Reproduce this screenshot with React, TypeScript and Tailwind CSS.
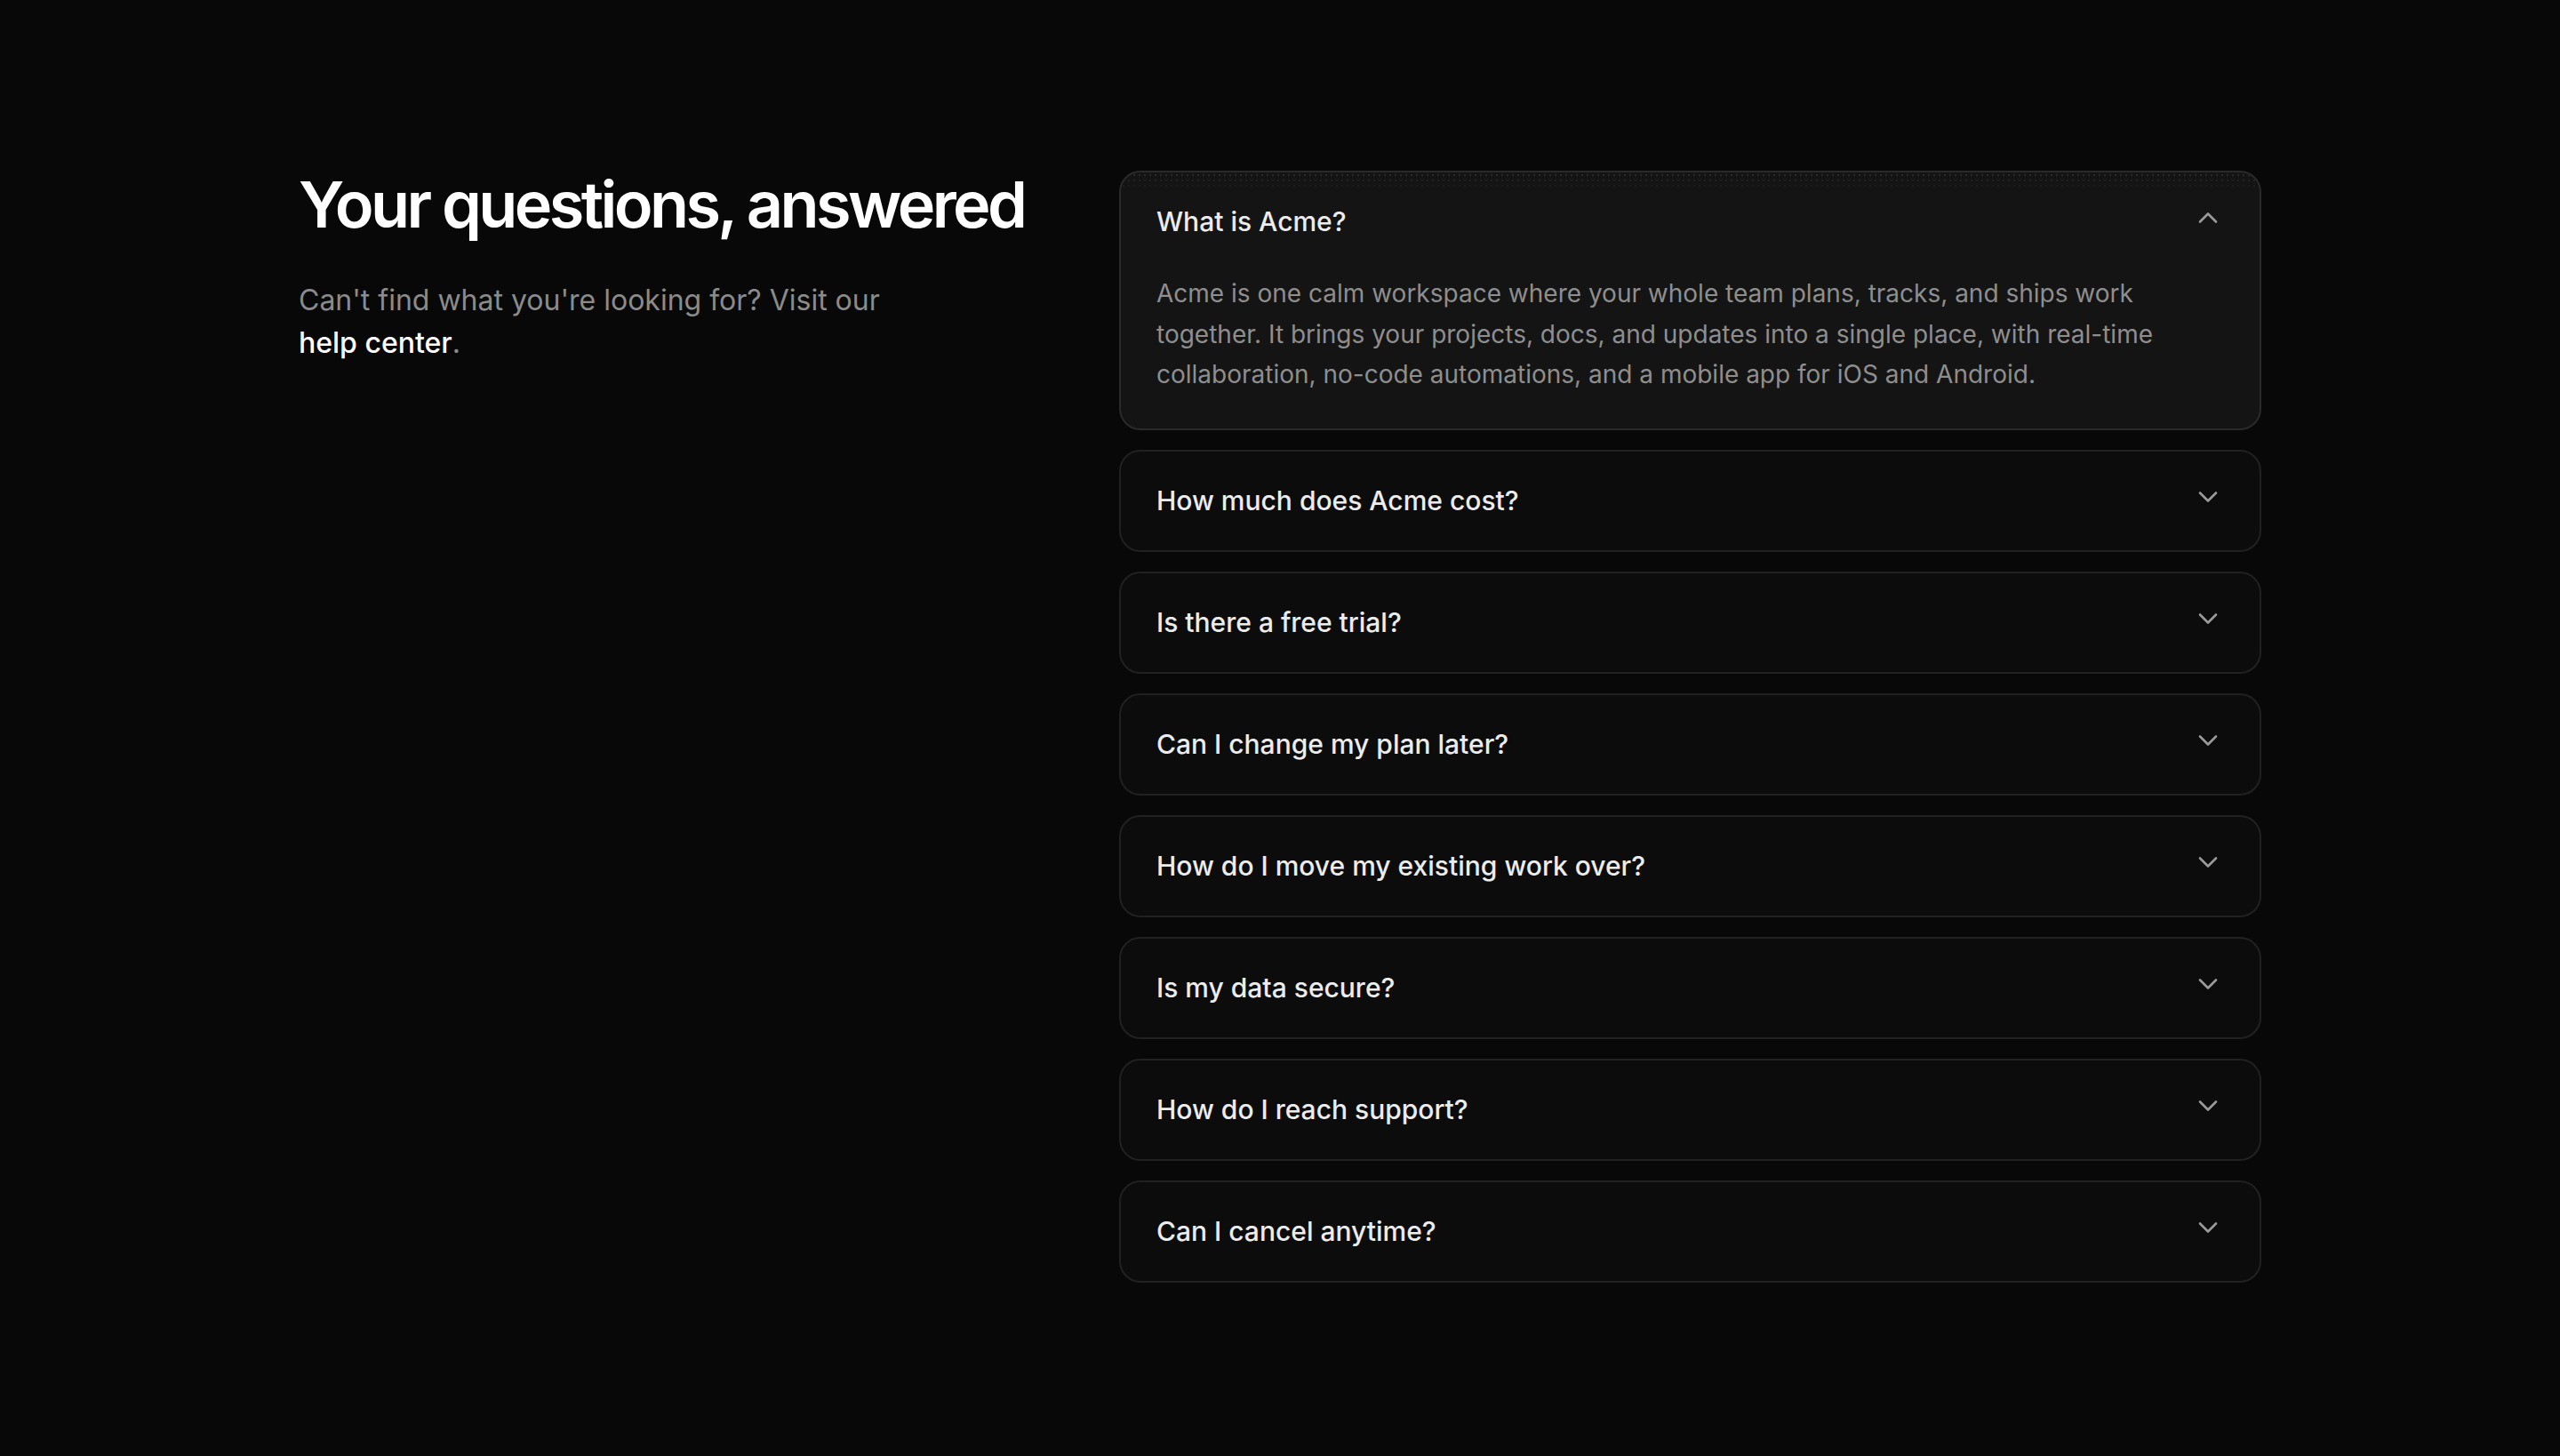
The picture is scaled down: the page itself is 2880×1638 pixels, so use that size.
import { ChevronDown, ChevronUp } from "lucide-react";

type Item = { q: string; a?: string };

const items: Item[] = [
  {
    q: "What is Acme?",
    a: "Acme is one calm workspace where your whole team plans, tracks, and ships work together. It brings your projects, docs, and updates into a single place, with real-time collaboration, no-code automations, and a mobile app for iOS and Android.",
  },
  { q: "How much does Acme cost?" },
  { q: "Is there a free trial?" },
  { q: "Can I change my plan later?" },
  { q: "How do I move my existing work over?" },
  { q: "Is my data secure?" },
  { q: "How do I reach support?" },
  { q: "Can I cancel anytime?" },
];

function FaqItem({ item, open }: { item: Item; open: boolean }) {
  return (
    <div
      className={
        open
          ? "relative overflow-hidden rounded-[24px] border-2 border-[#2a2a2a] bg-[#141414]"
          : "relative overflow-hidden rounded-[24px] border-2 border-[#212121] bg-[#0c0c0c]"
      }
    >
      {open && (
        <div className="pointer-events-none absolute inset-x-0 top-0 h-[22px] bg-[radial-gradient(circle,#2e2e2e_1px,transparent_1.3px)] [background-size:6px_6px] [mask-image:linear-gradient(to_bottom,black,transparent)]" />
      )}
      <button className="relative flex w-full items-start justify-between pl-[40px] pr-[40px] py-[33px] text-left">
        <span className="text-[30px] leading-[45px] font-medium text-[#ececec]">
          {item.q}
        </span>
        {open ? (
          <ChevronUp size={36} strokeWidth={1.75} className="shrink-0 text-[#9a9a9a]" />
        ) : (
          <ChevronDown size={36} strokeWidth={1.75} className="shrink-0 text-[#9a9a9a]" />
        )}
      </button>
      {open && item.a && (
        <div className="relative pl-[40px] pr-[40px] pt-[3px] pb-[37px]">
          <p className="text-[28px] leading-[45.5px] text-[#8e8e8e]">{item.a}</p>
        </div>
      )}
    </div>
  );
}

export default function App() {
  return (
    <div className="min-h-screen w-full bg-[#080808] font-['Inter',sans-serif] antialiased">
      <div className="mx-auto flex w-[2208px] justify-between pt-[192px] pb-[192px]">
        <div className="flex-1">
          <h1 className="text-[72px] leading-[76px] font-semibold tracking-[-0.05em] text-white">
            Your questions, answered
          </h1>
          <p className="mt-[46px] max-w-[690px] text-[32px] leading-[48px] text-[#8b8b8b]">
            Can't find what you're looking for? Visit our{" "}
            <a className="font-medium text-white">help center</a>.
          </p>
        </div>
        <div className="flex w-[1285px] flex-col gap-[22px]">
          {items.map((it, i) => (
            <FaqItem key={it.q} item={it} open={i === 0} />
          ))}
        </div>
      </div>
    </div>
  );
}
